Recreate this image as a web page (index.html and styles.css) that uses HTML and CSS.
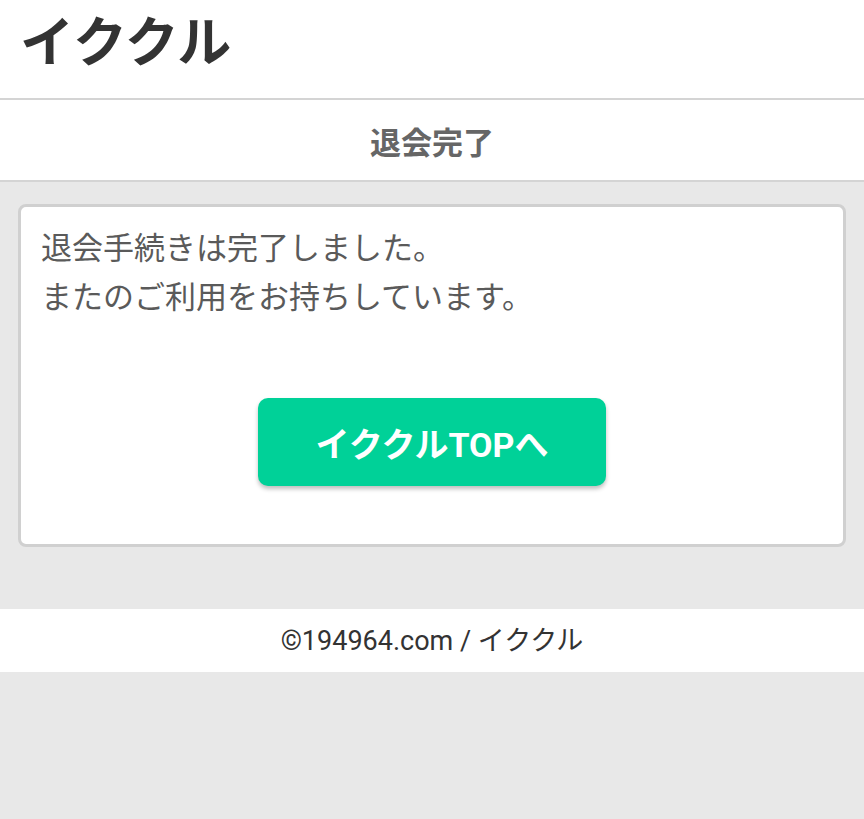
FILE: index.html
```html
<!DOCTYPE html>
<html lang="ja">
<head>
    <meta charset="UTF-8">
    <meta name="viewport" content="width=device-width, initial-scale=1.0">
    <title>退会完了 | イククル</title>
    <link rel="stylesheet" href="styles.css">
</head>
<body>
    <header class="site-header">
        <h1 class="logo">イククル</h1>
    </header>

    <div class="page-title">
        <h2>退会完了</h2>
    </div>

    <main class="content">
        <section class="card">
            <p class="message">退会手続きは完了しました。<br>またのご利用をお持ちしています。</p>
            <div class="actions">
                <a class="btn-top" href="#">イククルTOPへ</a>
            </div>
        </section>
    </main>

    <!-- Footer -->
    <footer class="site-footer">
        <p>©194964.com / イククル</p>
    </footer>
</body>
</html>
```

FILE: styles.css
```css
/* General */
body {
    margin: 0;
    padding: 0;
    background: #e8e8e8;
    font-family: "Roboto", "Noto Sans CJK JP", sans-serif;
    color: #333;
}

/* Header */
.site-header {
    background: #fff;
    height: 98px;
    border-bottom: 2px solid #d4d4d4;
    display: flex;
    align-items: center;
    padding: 0 20px;
}
.logo {
    margin: 0;
    font-family: "Noto Sans CJK JP", sans-serif;
    font-size: 54px;
    font-weight: bold;
    color: #333;
    line-height: 1;
    margin-top: -20px;
}

/* Page title */
.page-title {
    background: #fff;
    height: 80px;
    border-bottom: 2px solid #d4d4d4;
    display: flex;
    align-items: center;
    justify-content: center;
}
.page-title h2 {
    margin: 0;
    font-family: "Noto Sans CJK JP", sans-serif;
    font-size: 31px;
    font-weight: bold;
    color: #666;
}

/* Card */
.content {
    padding: 22px 18px 62px;
}
.card {
    background: #fff;
    border: 3px solid #d0d0d0;
    border-radius: 8px;
    padding: 14px 20px 58px;
}
.message {
    margin: 0;
    font-family: "Noto Sans CJK JP", sans-serif;
    font-size: 31px;
    line-height: 49px;
    color: #5a5a5a;
}
.actions {
    display: flex;
    justify-content: center;
    margin-top: 79px;
}
.btn-top {
    display: flex;
    align-items: center;
    justify-content: center;
    width: 348px;
    height: 88px;
    background: #00d198;
    color: #fff;
    font-size: 34px;
    font-weight: bold;
    text-decoration: none;
    border-radius: 10px;
    box-shadow: 0 3px 4px rgba(0, 0, 0, 0.25);
}

/* Footer */
.site-footer {
    background: #fff;
    height: 63px;
    display: flex;
    align-items: center;
    justify-content: center;
}
.site-footer p {
    margin: 0 0 4px;
    font-size: 27px;
    color: #333;
}
```
